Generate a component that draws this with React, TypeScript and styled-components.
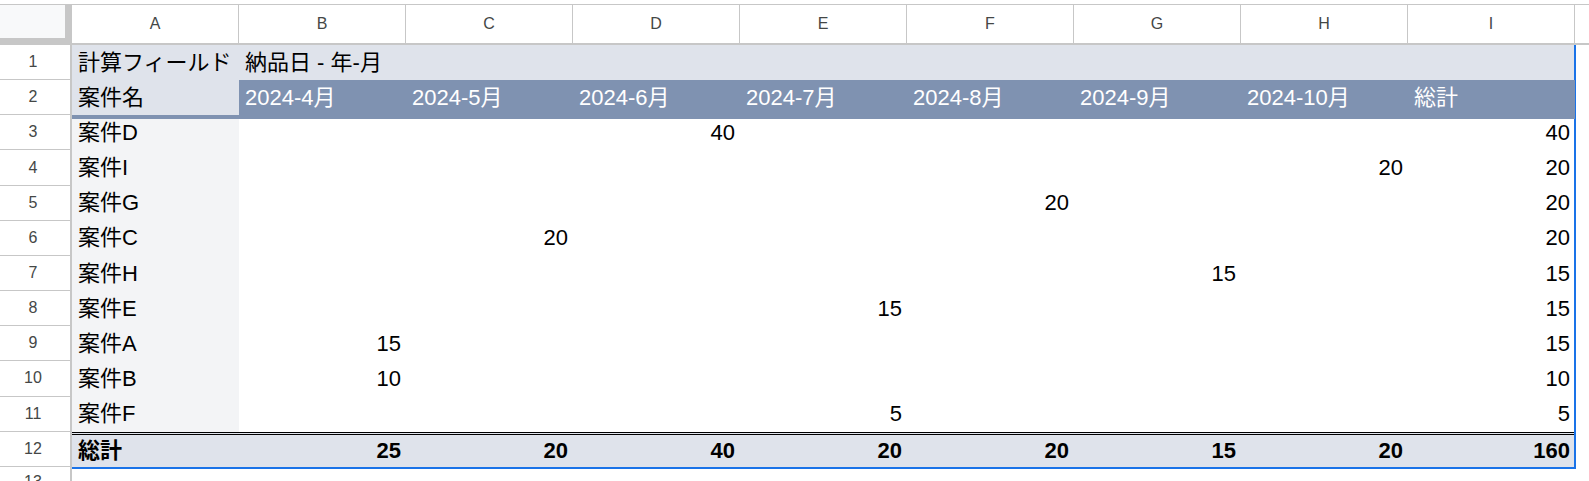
import React from "react";
import styled, { createGlobalStyle, css } from "styled-components";

const GlobalStyle = createGlobalStyle`
  html, body {
    margin: 0;
    padding: 0;
    background: #ffffff;
    overflow: hidden;
  }
`;

const COLS = "72px repeat(9, 167px) 1fr";
const ROW_H = 35.17;

const LIGHT = "#dfe3eb";
const DARK = "#7f92b1";
const SIDE = "#f3f4f6";
const GRID = "#c7c7c7";

const Sheet = styled.div`
  position: relative;
  width: 1589px;
  height: 481px;
  padding-top: 4px;
  box-sizing: border-box;
  overflow: hidden;
  font-family: "Liberation Sans", "Noto Sans CJK JP", sans-serif;
`;

const HeaderRow = styled.div`
  display: grid;
  grid-template-columns: ${COLS};
  height: 41px;
  border-top: 1px solid ${GRID};
  box-sizing: border-box;
`;

const Corner = styled.div`
  background: #f8f9fa;
  border-right: 7px solid ${GRID};
  border-bottom: 7px solid ${GRID};
`;

const ColHead = styled.div<{ $last?: boolean }>`
  display: flex;
  align-items: center;
  justify-content: center;
  border-right: ${(p) => (p.$last ? "none" : `1px solid ${GRID}`)};
  border-bottom: 2px solid ${GRID};
  color: #444746;
  font-size: 16px;
`;

const Row = styled.div`
  display: grid;
  grid-template-columns: ${COLS};
  height: ${ROW_H}px;
`;

const RowNum = styled.div<{ $cut?: boolean }>`
  display: flex;
  align-items: ${(p) => (p.$cut ? "flex-start" : "center")};
  justify-content: center;
  padding: ${(p) => (p.$cut ? "6px" : "0")} 4px 0 0;
  border-right: 2px solid ${GRID};
  border-bottom: 1px solid ${GRID};
  color: #444746;
  font-size: 16px;
  line-height: 18px;
`;

type Kind = "title" | "band" | "corner" | "name" | "value" | "total";

const Cell = styled.div<{ $kind: Kind; $right?: boolean }>`
  display: flex;
  align-items: center;
  justify-content: ${(p) => (p.$right ? "flex-end" : "flex-start")};
  padding: 0 ${(p) => (p.$right ? "5px" : "6px")} 0 6px;
  box-sizing: border-box;
  white-space: nowrap;
  font-size: 22px;
  line-height: 24px;
  color: #000;
  ${(p) =>
    (p.$kind === "band" || p.$kind === "corner") &&
    css`
      position: relative;
      z-index: 1;
      box-shadow: 0 4px 0 ${DARK};
    `}
  ${(p) =>
    (p.$kind === "title" || p.$kind === "corner") &&
    css`
      background: ${LIGHT};
    `}
  ${(p) =>
    p.$kind === "band" &&
    css`
      background: ${DARK};
      color: #ffffff;
    `}
  ${(p) =>
    p.$kind === "name" &&
    css`
      background: ${SIDE};
    `}
  ${(p) =>
    p.$kind === "total" &&
    css`
      background: ${LIGHT};
      border-top: 3px double #000;
      font-weight: bold;
    `}
`;

const Selection = styled.div`
  position: absolute;
  left: 72px;
  top: 45px;
  width: 1504px;
  height: 424px;
  border-right: 2px solid #1a73e8;
  border-bottom: 2px solid #1a73e8;
  box-sizing: border-box;
  pointer-events: none;
`;

const letters = ["A", "B", "C", "D", "E", "F", "G", "H", "I"];
const months = ["2024-4月", "2024-5月", "2024-6月", "2024-7月", "2024-8月", "2024-9月", "2024-10月", "総計"];

// 案件ごとの値: col は 0 = 2024-4月
const projects: { name: string; col: number; value: number }[] = [
  { name: "案件D", col: 2, value: 40 },
  { name: "案件I", col: 6, value: 20 },
  { name: "案件G", col: 4, value: 20 },
  { name: "案件C", col: 1, value: 20 },
  { name: "案件H", col: 5, value: 15 },
  { name: "案件E", col: 3, value: 15 },
  { name: "案件A", col: 0, value: 15 },
  { name: "案件B", col: 0, value: 10 },
  { name: "案件F", col: 3, value: 5 },
];

const totals = [25, 20, 40, 20, 20, 15, 20, 160];

export default function App() {
  return (
    <Sheet>
      <GlobalStyle />
      <HeaderRow>
        <Corner />
        {letters.map((l) => (
          <ColHead key={l}>{l}</ColHead>
        ))}
        <ColHead $last />
      </HeaderRow>

      <Row>
        <RowNum>1</RowNum>
        <Cell $kind="title">計算フィールド</Cell>
        <Cell $kind="title">納品日 - 年-月</Cell>
        {months.slice(1).map((m) => (
          <Cell key={m} $kind="title" />
        ))}
        <div />
      </Row>

      <Row>
        <RowNum>2</RowNum>
        <Cell $kind="corner">案件名</Cell>
        {months.map((m) => (
          <Cell key={m} $kind="band">
            {m}
          </Cell>
        ))}
        <div />
      </Row>

      {projects.map((p, i) => (
        <Row key={p.name}>
          <RowNum>{i + 3}</RowNum>
          <Cell $kind="name">{p.name}</Cell>
          {months.map((m, c) => (
            <Cell key={m} $kind="value" $right>
              {c === p.col || c === 7 ? p.value : ""}
            </Cell>
          ))}
          <div />
        </Row>
      ))}

      <Row>
        <RowNum>12</RowNum>
        <Cell $kind="total">総計</Cell>
        {totals.map((t, c) => (
          <Cell key={c} $kind="total" $right>
            {t}
          </Cell>
        ))}
        <div />
      </Row>

      <Row>
        <RowNum $cut>13</RowNum>
      </Row>

      <Selection />
    </Sheet>
  );
}
